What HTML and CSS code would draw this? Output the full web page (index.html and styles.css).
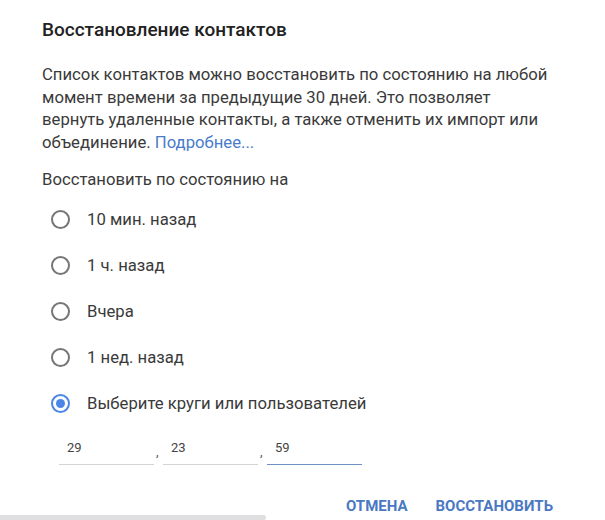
FILE: index.html
```html
<!DOCTYPE html>
<html lang="ru">
<head>
<meta charset="utf-8">
<title>Восстановление контактов</title>
<link rel="stylesheet" href="styles.css">
</head>
<body>
<div class="dialog">
  <h1 class="title">Восстановление контактов</h1>
  <p class="desc">Список контактов можно восстановить по состоянию на любой момент времени за предыдущие 30 дней. Это позволяет вернуть удаленные контакты, а также отменить их импорт или объединение. <a class="link" href="#">Подробнее...</a></p>
  <div class="label">Восстановить по состоянию на</div>
  <div class="options">
    <div class="option"><span class="radio"></span><span class="opt-text">10 мин. назад</span></div>
    <div class="option"><span class="radio"></span><span class="opt-text">1 ч. назад</span></div>
    <div class="option"><span class="radio"></span><span class="opt-text">Вчера</span></div>
    <div class="option"><span class="radio"></span><span class="opt-text">1 нед. назад</span></div>
    <div class="option"><span class="radio checked"></span><span class="opt-text">Выберите круги или пользователей</span></div>
  </div>
  <div class="fields">
    <div class="field">29</div>
    <span class="comma">,</span>
    <div class="field">23</div>
    <span class="comma">,</span>
    <div class="field active">59</div>
  </div>
  <div class="actions">
    <button class="btn">Отмена</button>
    <button class="btn">Восстановить</button>
  </div>
</div>
<div class="scroll-thumb"></div>
</body>
</html>
```
FILE: styles.css
```css
html, body {
  margin: 0;
  padding: 0;
  background: #ffffff;
}
body {
  font-family: Roboto, "Noto Sans", Arial, sans-serif;
  color: #333333;
  width: 605px;
  height: 520px;
  overflow: hidden;
}
.dialog {
  padding: 16px 0 0 42px;
  width: 513px;
}
.title {
  margin: 0;
  font-size: 19px;
  line-height: 28px;
  font-weight: 500;
  color: #222222;
}
.desc {
  margin: 20px 0 0 0;
  font-size: 16.7px;
  line-height: 22.7px;
  color: #3a3a3a;
}
.link {
  color: #4a7cc9;
  text-decoration: none;
}
.label {
  margin-top: 14px;
  font-size: 16.7px;
  line-height: 22px;
  color: #3a3a3a;
}
.options {
  margin-top: 6px;
  display: flex;
  flex-direction: column;
}
.option {
  display: flex;
  align-items: center;
  height: 46px;
}
.radio {
  box-sizing: border-box;
  width: 19px;
  height: 19px;
  margin-left: 9px;
  border: 2px solid #767676;
  border-radius: 50%;
  display: flex;
  align-items: center;
  justify-content: center;
}
.radio.checked {
  border-color: #4a85e8;
}
.radio.checked::after {
  content: "";
  width: 9px;
  height: 9px;
  border-radius: 50%;
  background: #4a85e8;
}
.opt-text {
  margin-left: 17px;
  font-size: 16.7px;
  color: #3a3a3a;
}
.fields {
  margin-top: 12px;
  margin-left: 17px;
  display: flex;
  align-items: flex-end;
}
.field {
  width: 87px;
  padding: 0 0 7px 8px;
  border-bottom: 1px solid #d4d4d4;
  font-size: 13px;
  line-height: 18px;
  color: #444444;
}
.field.active {
  border-bottom-color: #6e90c4;
}
.comma {
  box-sizing: border-box;
  width: 9px;
  padding-left: 2px;
  font-size: 13px;
  line-height: 18px;
  padding-bottom: 4px;
  color: #555555;
}
.actions {
  margin-top: 31px;
  display: flex;
  justify-content: flex-end;
  gap: 28px;
  width: 511px;
}
.btn {
  border: none;
  background: none;
  padding: 0;
  font-family: Roboto, "Noto Sans", Arial, sans-serif;
  font-size: 15px;
  font-weight: 700;
  text-transform: uppercase;
  color: #4a78c2;
  line-height: 20px;
  cursor: pointer;
}
.scroll-thumb {
  position: fixed;
  left: 0;
  bottom: 0;
  width: 266px;
  height: 5px;
  background: #dfdfe2;
  border-radius: 0 3px 3px 0;
}
```
